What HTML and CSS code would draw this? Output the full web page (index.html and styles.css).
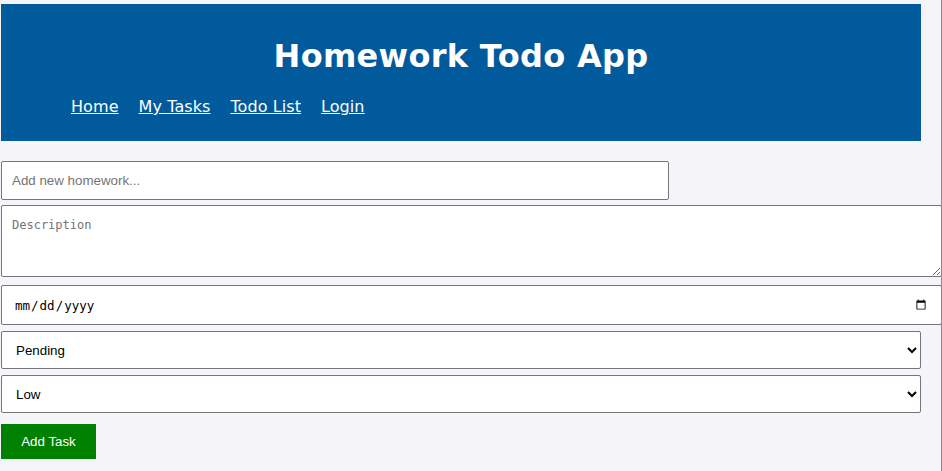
FILE: index.html
```html
<!DOCTYPE html>
<html lang="en">
<head>
<meta charset="utf-8">
<title>Homework Todo App</title>
<link rel="stylesheet" href="styles.css">
</head>
<body>
  <header class="site-header">
    <h1 class="site-title">Homework Todo App</h1>
    <nav class="site-nav">
      <a href="#">Home</a>
      <a href="#">My Tasks</a>
      <a href="#">Todo List</a>
      <a href="#">Login</a>
    </nav>
  </header>
  <form class="task-form">
    <input class="field field-title" type="text" placeholder="Add new homework...">
    <textarea class="field field-desc" placeholder="Description"></textarea>
    <input class="field field-date" type="date">
    <select class="field field-select">
      <option>Pending</option>
      <option>Completed</option>
    </select>
    <select class="field field-select field-last">
      <option>Low</option>
      <option>Medium</option>
      <option>High</option>
    </select>
    <button class="add-btn" type="button">Add Task</button>
  </form>
</body>
</html>
```
FILE: styles.css
```css
html {
  background: #f4f4f9;
}
body {
  margin: 0;
  padding: 4px 0 0 1px;
  width: 942px;
  min-height: 100vh;
  box-sizing: border-box;
  border-right: 1px solid #8a8a8a;
  background: #f4f4f9;
  font-family: "Liberation Sans", Arial, sans-serif;
  overflow: hidden;
}
.site-header {
  width: 920px;
  height: 137px;
  box-sizing: border-box;
  background: #005a9c;
  color: #fff;
  padding: 34px 20px 0;
  font-family: "DejaVu Sans", Verdana, sans-serif;
}
.site-title {
  margin: 0;
  text-align: center;
  font-size: 32px;
  font-weight: bold;
  line-height: 37px;
  letter-spacing: 0.3px;
}
.site-nav {
  display: flex;
  gap: 20px;
  margin-top: 22px;
  padding-left: 50px;
  font-size: 16px;
  line-height: 19px;
  letter-spacing: 0.08px;
}
.site-nav a {
  color: #fff;
  text-decoration: underline;
}
.task-form {
  display: flex;
  flex-direction: column;
  align-items: flex-start;
  margin-top: 20px;
}
.field {
  display: block;
  box-sizing: border-box;
  margin: 0;
  border: 1px solid #767676;
  border-radius: 2px;
  background: #fff;
  font-size: 13.333px;
  font-family: "Liberation Sans", Arial, sans-serif;
  color: #000;
}
.field-title {
  width: 668px;
  height: 39px;
  padding: 10px;
  margin-bottom: 5px;
}
.field-title::placeholder {
  color: #757575;
}
.field-desc {
  width: 941px;
  height: 72px;
  padding: 12px 10px 10px;
  margin-bottom: 8px;
  font-family: "DejaVu Sans Mono", monospace;
  font-size: 12px;
}
.field-desc::placeholder {
  color: #757575;
}
.field-date {
  width: 941px;
  height: 40px;
  padding: 10px 12px;
  margin-bottom: 6px;
  font-family: "DejaVu Sans Mono", monospace;
  font-size: 12.5px;
}
.field-select {
  width: 920px;
  height: 38px;
  padding: 0 10px;
  margin-bottom: 6px;
}
.field-last {
  margin-bottom: 11px;
}
.add-btn {
  width: 95px;
  height: 35px;
  border: none;
  background: #008000;
  color: #fff;
  font-family: "Liberation Sans", Arial, sans-serif;
  font-size: 13.333px;
  padding: 0;
}
```
